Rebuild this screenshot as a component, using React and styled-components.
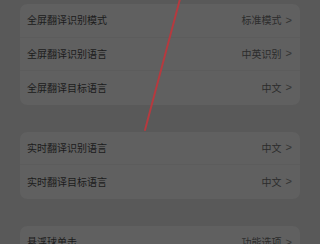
import React from 'react'
import styled, { createGlobalStyle } from 'styled-components'

const GlobalStyle = createGlobalStyle`
  html, body {
    margin: 0;
    padding: 0;
    background: #595959;
    font-family: "Noto Sans CJK SC", "Noto Sans", sans-serif;
  }
`

const sections = [
  [
    { label: '全屏翻译识别模式', value: '标准模式' },
    { label: '全屏翻译识别语言', value: '中英识别' },
    { label: '全屏翻译目标语言', value: '中文' },
  ],
  [
    { label: '实时翻译识别语言', value: '中文' },
    { label: '实时翻译目标语言', value: '中文' },
  ],
  [
    { label: '悬浮球单击', value: '功能选项' },
  ],
]

function App() {
  return (
    <>
      <GlobalStyle />
      <Page>
        {sections.map((rows, i) => (
          <Card key={i}>
            {rows.map((row, j) => (
              <Row key={row.label} last={j === rows.length - 1}>
                <Label>{row.label}</Label>
                <Value>
                  {row.value}
                  <Chevron>&gt;</Chevron>
                </Value>
              </Row>
            ))}
          </Card>
        ))}
        <Mark viewBox="0 0 320 244" width="320" height="244">
          <line x1="180" y1="-1" x2="145" y2="130" stroke="#b53a3f" strokeWidth="2" strokeLinecap="round" />
        </Mark>
      </Page>
    </>
  )
}

export default App

const Page = styled.div`
  position: relative;
  width: 320px;
  height: 244px;
  overflow: hidden;
  box-sizing: border-box;
  padding: 4px 20px 0;
  display: flex;
  flex-direction: column;
  gap: 27px;
`

const Card = styled.div`
  background: #606060;
  border-radius: 7px;
  display: flex;
  flex-direction: column;
  flex: none;
`

const Row = styled.div`
  height: 33.5px;
  display: flex;
  align-items: center;
  justify-content: space-between;
  padding: 0 8px 0 7px;
  box-sizing: border-box;
  border-bottom: ${p => (p.last ? 'none' : '1px solid rgba(0,0,0,0.035)')};
`

const Label = styled.span`
  color: #1c1c1c;
  font-size: 10px;
  line-height: 1;
`

const Value = styled.span`
  color: #2c2c2c;
  font-size: 10px;
  line-height: 1;
  display: flex;
  align-items: center;
`

const Chevron = styled.span`
  margin-left: 4px;
  font-family: "Liberation Sans", sans-serif;
  font-size: 11px;
  color: #333;
`

const Mark = styled.svg`
  position: absolute;
  left: 0;
  top: 0;
  pointer-events: none;
`
